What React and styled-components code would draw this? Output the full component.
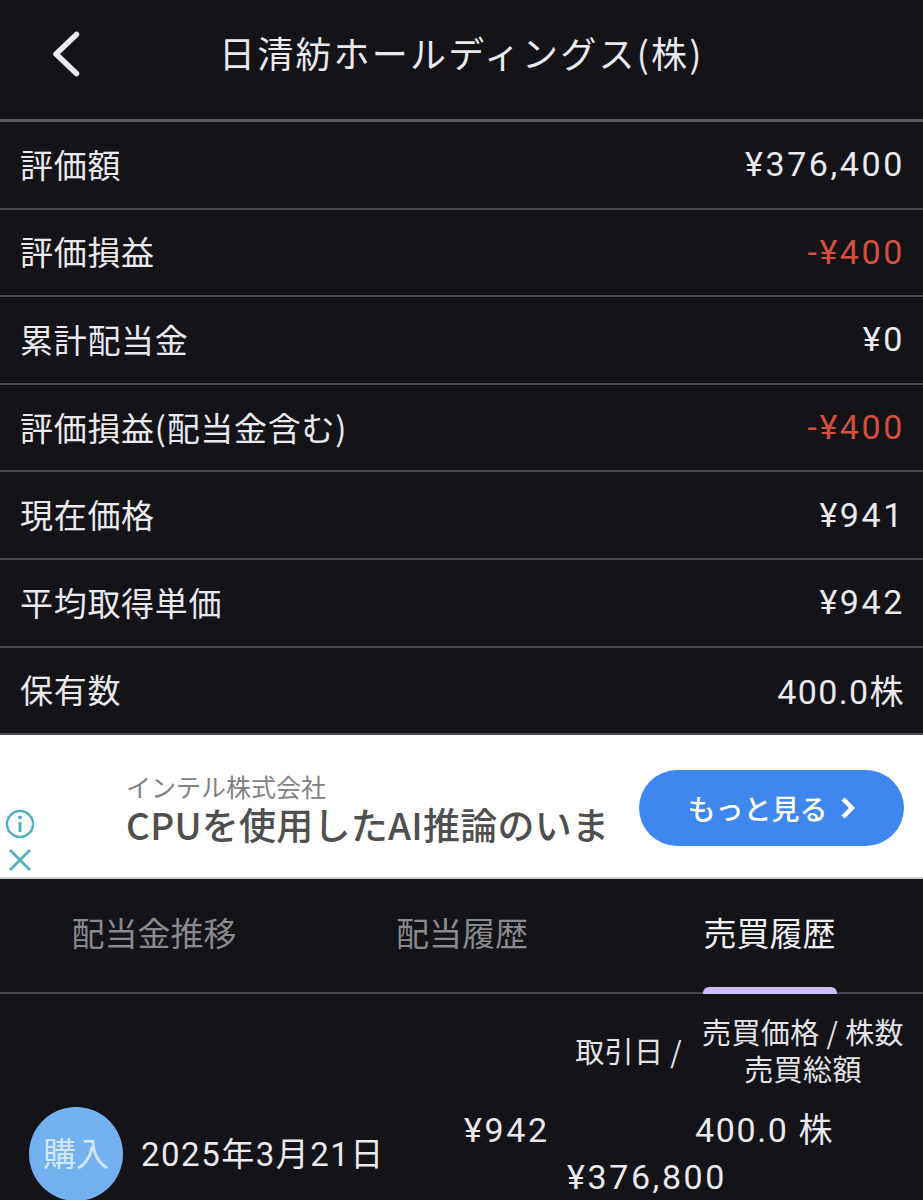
import styled, { createGlobalStyle } from "styled-components";

const cjk = `"Noto Sans CJK JP", "Inter", sans-serif`;

const GlobalStyle = createGlobalStyle`
  html, body {
    margin: 0;
    padding: 0;
    background: #131318;
    height: 1200px;
    overflow: hidden;
  }
`;

const Page = styled.div`
  width: 923px;
  height: 1200px;
  overflow: hidden;
  background: #131318;
  color: #e9e9ee;
  font-family: ${cjk};
`;

const Header = styled.header`
  height: 119px;
  display: flex;
  align-items: flex-start;
  border-bottom: 3px solid #5c5c61;
`;

const BackButton = styled.div`
  width: 219px;
  padding: 29px 0 0 50px;
  box-sizing: border-box;
  flex-shrink: 0;
`;

const Title = styled.h1`
  margin: 0;
  padding-top: 28px;
  font-size: 36px;
  line-height: 48px;
  font-weight: 400;
  white-space: nowrap;
  letter-spacing: 2.2px;
`;

const Row = styled.div`
  height: 87.6px;
  box-sizing: border-box;
  padding: 0 18px 2px 20px;
  display: flex;
  align-items: center;
  justify-content: space-between;
  border-bottom: 2px solid #48484d;
  font-size: 33px;
  letter-spacing: 0.7px;
`;

const Value = styled.span`
  font-family: "Roboto", ${cjk};
  font-size: 34px;
  letter-spacing: ${(p) => (p.$tight ? "1.4px" : "2.6px")};
  margin-top: 1px;
  color: ${(p) => (p.$negative ? "#d2503c" : "#e9e9ee")};
`;

const Ad = styled.aside`
  height: 144px;
  background: #fff;
  display: flex;
  position: relative;
  box-sizing: border-box;
  padding: 0 19px 0 126px;
  align-items: center;
  justify-content: space-between;
  border-bottom: 2px solid #cfcfcf;
`;

const AdIcons = styled.div`
  position: absolute;
  left: 5px;
  bottom: 5px;
  display: flex;
  flex-direction: column;
  gap: 9px;
  align-items: center;
`;

const AdCopy = styled.div`
  display: flex;
  flex-direction: column;
  padding-top: 6px;
`;

const Advertiser = styled.div`
  font-size: 25px;
  line-height: 30px;
  color: #818181;
`;

const Headline = styled.div`
  font-size: 37px;
  line-height: 46px;
  font-weight: 500;
  color: #4f4f4f;
  white-space: nowrap;
  letter-spacing: 0.25px;
`;

const AdButton = styled.div`
  width: 265px;
  height: 76px;
  border-radius: 38px;
  background: #3f87ef;
  color: #fff;
  font-size: 28px;
  font-weight: 500;
  display: flex;
  align-items: center;
  justify-content: center;
  gap: 12px;
  margin-top: 4px;
`;

const Tabs = styled.nav`
  height: 113px;
  display: grid;
  grid-template-columns: 308px 308px 307px;
  border-bottom: 2px solid #48484d;
  position: relative;
`;

const Tab = styled.div`
  position: relative;
  display: flex;
  justify-content: center;
  padding-top: 29px;
  font-size: 33px;
  line-height: 48px;
  color: ${(p) => (p.$active ? "#f0f0f4" : "#8a8a8e")};
`;

const TabMark = styled.div`
  position: absolute;
  bottom: -2px;
  left: 87px;
  width: 134px;
  height: 7px;
  background: #cdbdf6;
  border-radius: 6px 6px 0 0;
`;

const TableHead = styled.div`
  display: flex;
  justify-content: flex-end;
  align-items: center;
  padding: 19px 19px 0 0;
  font-size: 29px;
  line-height: 37px;
  letter-spacing: 0.4px;
  color: #e4e4e8;
`;

const DateHead = styled.div`
  margin-right: 20px;
  white-space: nowrap;
`;

const PriceHead = styled.div`
  text-align: center;
  white-space: nowrap;
`;

const Trade = styled.div`
  display: flex;
  align-items: flex-start;
  padding: 20px 0 0 29px;
`;

const Badge = styled.div`
  width: 94px;
  height: 94px;
  border-radius: 50%;
  background: #74b1f1;
  color: #d4e6fa;
  font-size: 33px;
  display: flex;
  align-items: center;
  justify-content: center;
  padding-bottom: 4px;
  box-sizing: border-box;
  flex-shrink: 0;
`;

const TradeDate = styled.div`
  margin: 24px 0 0 18px;
  width: 300px;
  font-size: 33px;
  line-height: 48px;
  white-space: nowrap;
  font-family: "Roboto", ${cjk};
  letter-spacing: 1.5px;
`;

const TradeNumbers = styled.div`
  display: grid;
  grid-template-columns: 231px 150px;
  margin-left: 23px;
  font-family: "Roboto", ${cjk};
  font-size: 34px;
  line-height: 47px;
  letter-spacing: 2.6px;
`;

const ShareCount = styled.div`
  white-space: nowrap;
  letter-spacing: 1.6px;
`;

const TotalAmount = styled.div`
  grid-column: 1 / 3;
  padding-left: 103px;
`;

const rows = [
  { label: "評価額", value: "¥376,400" },
  { label: "評価損益", value: "-¥400", negative: true },
  { label: "累計配当金", value: "¥0" },
  { label: "評価損益(配当金含む)", value: "-¥400", negative: true },
  { label: "現在価格", value: "¥941" },
  { label: "平均取得単価", value: "¥942" },
  { label: "保有数", value: "400.0株", tight: true },
];

const App = () => {
  return (
    <Page>
      <GlobalStyle />
      <Header>
        <BackButton>
          <svg width="32" height="50" viewBox="0 0 32 50" fill="none">
            <path d="M26.5 5.5 L6 25 L26.5 44.5" stroke="#ececf0" strokeWidth="5.5" strokeLinecap="round" strokeLinejoin="round" />
          </svg>
        </BackButton>
        <Title>日清紡ホールディングス(株)</Title>
      </Header>
      {rows.map(({ label, value, negative, tight }) => (
        <Row key={label}>
          <span>{label}</span>
          <Value $negative={negative} $tight={tight}>
            {value}
          </Value>
        </Row>
      ))}
      <Ad>
        <AdCopy>
          <Advertiser>インテル株式会社</Advertiser>
          <Headline>CPUを使用したAI推論のいま</Headline>
        </AdCopy>
        <AdButton>
          もっと見る
          <svg width="16" height="24" viewBox="0 0 16 24" fill="none">
            <path d="M3 3 L12 12 L3 21" stroke="#fff" strokeWidth="4.5" />
          </svg>
        </AdButton>
        <AdIcons>
          <svg width="30" height="30" viewBox="0 0 30 30" fill="none">
            <circle cx="15" cy="15" r="13" stroke="#4fb0c4" strokeWidth="2.5" />
            <circle cx="15" cy="8.5" r="2" fill="#4fb0c4" />
            <path d="M15 13 V23" stroke="#4fb0c4" strokeWidth="3" />
          </svg>
          <svg width="24" height="24" viewBox="0 0 24 24" fill="none">
            <path d="M2 2 L22 22 M22 2 L2 22" stroke="#4fb0c4" strokeWidth="2.8" />
          </svg>
        </AdIcons>
      </Ad>
      <Tabs>
        <Tab>配当金推移</Tab>
        <Tab>配当履歴</Tab>
        <Tab $active>
          売買履歴
          <TabMark />
        </Tab>
      </Tabs>
      <TableHead>
        <DateHead>取引日 /</DateHead>
        <PriceHead>
          売買価格 / 株数
          <br />
          売買総額
        </PriceHead>
      </TableHead>
      <Trade>
        <Badge>購入</Badge>
        <TradeDate>2025年3月21日</TradeDate>
        <TradeNumbers>
          <div>¥942</div>
          <ShareCount>400.0 株</ShareCount>
          <TotalAmount>¥376,800</TotalAmount>
        </TradeNumbers>
      </Trade>
    </Page>
  );
};

export default App;
